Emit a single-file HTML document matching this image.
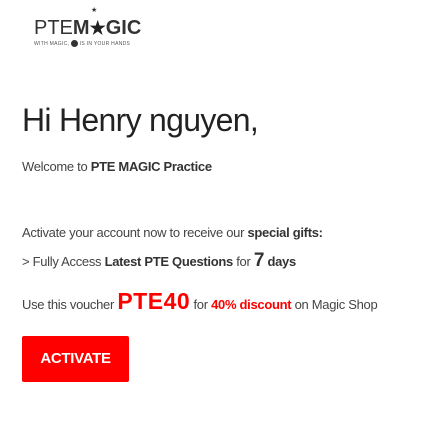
<!DOCTYPE html>
<html><head><meta charset="utf-8"><style>
body{margin:0;width:430px;height:430px;background:#fff;font-family:"Liberation Sans",sans-serif;color:#444;position:relative;overflow:hidden}
.a{position:absolute;left:22px;white-space:nowrap}
.t{font-size:13px;letter-spacing:-0.3px}
b{color:#333}
.r{color:#f00}
</style></head><body>
<div style="position:absolute;left:34px;top:15px;width:110px;height:36px">
 <div style="position:absolute;left:0;top:0;font-size:20px;line-height:26px;color:#333;white-space:nowrap">PTE<span style="font-weight:bold">M</span><span style="font-weight:bold;color:#222;font-size:18px">&#9733;</span><span style="font-weight:bold">GIC</span></div>
 <div style="position:absolute;left:57px;top:-9px;font-size:7px;color:#333">&#9733;</div>
 <div style="position:absolute;left:0;top:25px;font-size:5px;line-height:7px;color:#555;white-space:nowrap;letter-spacing:0.3px">WITH MAGIC, <span style="display:inline-block;width:7px;height:7px;border-radius:50%;background:#333;vertical-align:middle"></span> IS IN YOUR HANDS</div>
</div>
<div class="a" style="top:102px;font-size:32px;color:#222;letter-spacing:-0.7px">Hi Henry nguyen,</div>
<div class="a t" style="top:159px">Welcome to <b>PTE MAGIC Practice</b></div>
<div class="a t" style="top:225px">Activate your account now to receive our <b>special gifts:</b></div>
<div class="a t" style="top:250px">&gt; Fully Access <b>Latest PTE Questions</b> for <b style="font-size:19px">7</b> <b>days</b></div>
<div class="a t" style="top:288px">Use this voucher <b class="r" style="font-size:23px;letter-spacing:0.5px">PTE40</b> for <b class="r">40% discount</b> on Magic Shop</div>
<div style="position:absolute;left:22px;top:336px;width:107px;height:46px;background:#f00;border-radius:2px;color:#fff;font-weight:bold;font-size:15px;line-height:46px;text-align:center;letter-spacing:-0.3px">ACTIVATE</div>
</body></html>
